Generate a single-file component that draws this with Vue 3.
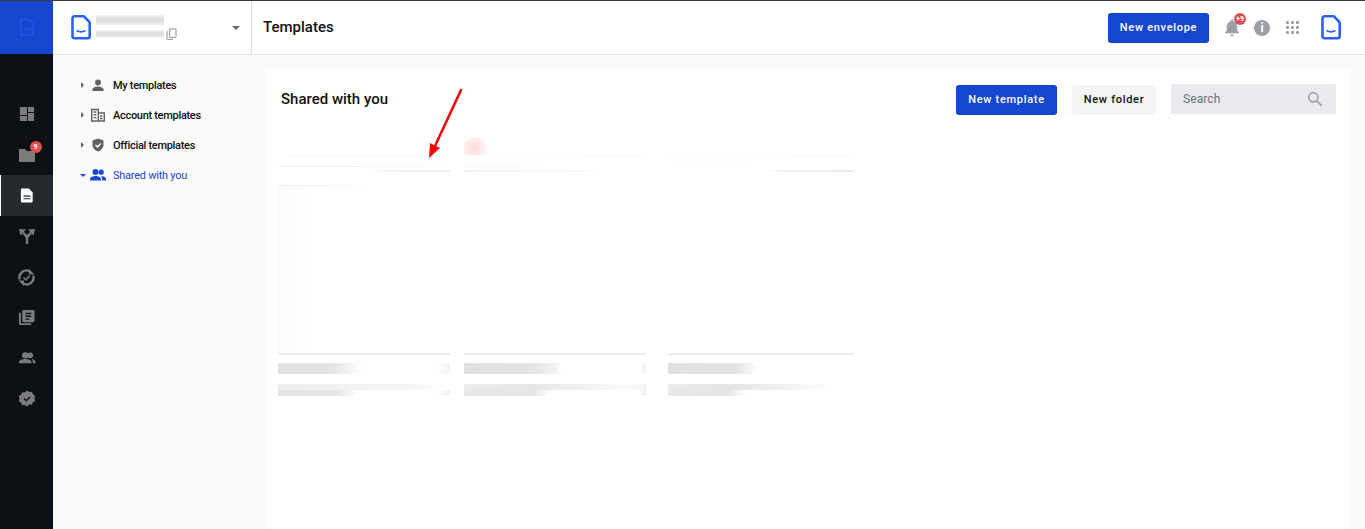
<script setup>
const cards = [
  {
    w: 172,
    a: 'linear-gradient(90deg,#fff 10px,#f6f6f6 10px,#f6f6f6 164px,#fff 164px)',
    b: 'linear-gradient(90deg,#f1f1f1,#f6f6f6 95px,#fbfbfb 172px)',
    c: 'linear-gradient(90deg,#fff 90px,#f3f3f3 110px,#efefef 172px)',
    d: 'linear-gradient(90deg,#eeeeee,#f8f8f8 70px,#fff 98px)',
    t: 'linear-gradient(90deg,#e2e2e2,#e4e4e4 55px,#fff 84px,#fff 160px,#f2f2f2 172px)',
    u: 'linear-gradient(90deg,#eeeeee,#f2f2f2 70px,#f5f5f5 130px,#fff 165px)',
    v: 'linear-gradient(90deg,#e4e4e4,#e6e6e6 60px,#fff 80px,#fff 160px,#f0f0f0 172px)',
  },
  {
    w: 182,
    a: 'linear-gradient(90deg,#fafafa,#f8f8f8)',
    b: 'linear-gradient(90deg,#f6f6f6,#fafafa 70px,#fff 85px)',
    c: 'linear-gradient(90deg,#f0f0f0,#f5f5f5 20px,#f6f6f6 80px,#fbfbfb 125px,#fff 140px)',
    d: 'linear-gradient(90deg,#fff,#fff)',
    t: 'linear-gradient(90deg,#e0e0e0,#e4e4e4 70px,#f3f3f3 92px,#fff 97px,#fff 175px,#f2f2f2 182px)',
    u: 'linear-gradient(90deg,#ececec,#e6e6e6 70px,#f0f0f0 110px,#fbfbfb 165px,#f4f4f4 182px)',
    v: 'linear-gradient(90deg,#e8e8e8,#e4e4e4 70px,#fff 85px,#fff 175px,#f0f0f0 182px)',
  },
  {
    w: 186,
    a: 'linear-gradient(90deg,#fafafa,#f8f8f8)',
    b: 'linear-gradient(90deg,#fff 0,#fafafa 10px,#fcfcfc 70px,#fff 90px)',
    c: 'linear-gradient(90deg,#fff 100px,#f0f0f0 115px,#ebebeb 186px)',
    d: 'linear-gradient(90deg,#fff,#fff)',
    t: 'linear-gradient(90deg,#e0e0e0,#e4e4e4 68px,#fff 90px)',
    u: 'linear-gradient(90deg,#ececec,#e4e4e4 65px,#f0f0f0 110px,#fff 165px)',
    v: 'linear-gradient(90deg,#e8e8e8,#e4e4e4 60px,#fff 78px)',
  },
]
const tree = [
  { label: 'My templates', icon: 'person' },
  { label: 'Account templates', icon: 'building' },
  { label: 'Official templates', icon: 'shield' },
  { label: 'Shared with you', icon: 'people', active: true },
]
</script>

<template>
  <div class="app">
    <aside class="rail">
      <div class="rail-head">
        <svg width="14" height="17" viewBox="0 0 20 25"><path d="M3 1h10l6 6v15a2 2 0 0 1-2 2H3a2 2 0 0 1-2-2V3a2 2 0 0 1 2-2z" fill="none" stroke="#1f55ea" stroke-width="2.200"/><path d="M1 15h18" stroke="#1f55ea" stroke-width="1.800"/></svg>
      </div>
      <nav class="rail-nav">
        <a class="rail-item">
          <svg width="16" height="16" viewBox="0 0 18 18" fill="#7b7b7b"><path d="M1 1h8v9H1zM10 1h7v6h-7zM10 8h7v9h-7zM1 11h8v6H1z"/><path d="M9 1h1v16H9zM1 10h9v1H1zM10 7h7v1h-7z" fill="#0d1116"/></svg>
        </a>
        <a class="rail-item">
          <span class="folder-wrap">
            <svg width="18" height="18" viewBox="0 0 18 18" fill="#7b7b7b"><path d="M1 3h6l2 2h7.500a.5.500 0 0 1 .5.500V16H1z"/></svg>
            <span class="dot">9</span>
          </span>
        </a>
        <a class="rail-item active">
          <svg width="14" height="17" viewBox="0 0 16 18"><path d="M2.500 1H10l4.500 4.500V15.500A1.500 1.500 0 0 1 13 17H2.500A1.500 1.500 0 0 1 1 15.500v-13A1.500 1.500 0 0 1 2.500 1z" fill="#fff"/><path d="M4 9h8v1.300H4zM4 12h8v1.300H4z" fill="#26292e"/></svg>
        </a>
        <a class="rail-item">
          <svg width="16" height="16" viewBox="0 0 16 16" fill="#7b7b7b"><path d="M6.800 16h2.400V9.800l3.800-4.200-1.700-1.600L8 7 5 4 3.300 5.600 6.800 9.800z"/><path d="M0 1l7 .5L1.500 7.500zM16 1l-7 .5 5.500 6z"/></svg>
        </a>
        <a class="rail-item">
          <svg width="17" height="17" viewBox="0 0 17 17" fill="none" stroke="#7b7b7b" stroke-width="2.300"><path d="M1.800 10.500A6.800 6.800 0 0 1 12 2.700"/><path d="M15.200 6.500A6.800 6.800 0 0 1 5 14.300"/><path d="M11 0v5.500h5.500z" fill="#7b7b7b" stroke="none"/><path d="M6 17v-5.500H.5z" fill="#7b7b7b" stroke="none"/><path d="M5.500 8.500l2.300 2.300L11.700 6.500" stroke-width="1.600"/></svg>
        </a>
        <a class="rail-item">
          <svg width="17" height="17" viewBox="0 0 18 18" fill="#7b7b7b"><path d="M1 4h2v11h11v2H2.500A1.500 1.500 0 0 1 1 15.500z"/><path fill-rule="evenodd" d="M6 1h10a1.500 1.500 0 0 1 1.500 1.500v10A1.500 1.500 0 0 1 16 14H6a1.500 1.500 0 0 1-1.500-1.500v-10A1.500 1.500 0 0 1 6 1zm2 3v1.500h6V4zm0 3v1.500h6V7zm0 3v1.500h4V10z"/></svg>
        </a>
        <a class="rail-item">
          <svg width="18" height="16" viewBox="0 0 20 18" fill="#7b7b7b"><circle cx="8" cy="6" r="3.600"/><circle cx="13.500" cy="6" r="3.300"/><path d="M1 15v-1.500C1 11 5 10 8 10s7 1 7 3.500V15zM15.500 10.200c2 .4 4 1.300 4 3.300V15h-3v-1.500c0-1.300-.400-2.400-1-3.300z"/></svg>
        </a>
        <a class="rail-item">
          <svg width="18" height="18" viewBox="0 0 18 18"><path d="M9 .5l2.200 1.500 2.700-.2 1 2.500 2.300 1.400-.7 2.600.7 2.600-2.300 1.400-1 2.500-2.700-.2L9 16.500l-2.200-1.500-2.700.2-1-2.500-2.300-1.400.7-2.600-.7-2.600 2.300-1.400 1-2.500 2.700.2z" fill="#7b7b7b"/><path d="M6 8.500l2.200 2.200L12 7" fill="none" stroke="#0d1116" stroke-width="1.500"/></svg>
        </a>
      </nav>
    </aside>

    <div class="body">
      <header class="topbar">
        <div class="account">
          <svg width="20" height="25" viewBox="0 0 20 25"><path d="M3.500 1.300h9.500l5.700 6v14a2 2 0 0 1-2 2H3.500a2 2 0 0 1-2-2v-18a2 2 0 0 1 2-2z" fill="#fff" stroke="#2b62f2" stroke-width="2.600" stroke-linejoin="round"/><path d="M5.500 15.500c3 1.800 6 1.800 9 0" fill="none" stroke="#2b62f2" stroke-width="1.800"/></svg>
          <div class="acc-lines">
            <span class="acc-line l1"></span>
            <span class="acc-row">
              <span class="acc-line l2"></span>
              <svg width="11" height="12" viewBox="0 0 11 12" fill="none" stroke="#a8a5a2" stroke-width="1.200"><rect x="3.500" y=".8" width="6.500" height="8.500" rx=".8"/><path d="M1 3v7.500a.8.8 0 0 0 .8.8H7"/></svg>
            </span>
          </div>
          <span class="caret-down"></span>
        </div>
        <h1 class="page-title">Templates</h1>
        <div class="top-actions">
          <button class="btn primary env">New envelope</button>
          <span class="bell">
            <svg width="16" height="18" viewBox="0 0 16 18" fill="#9aa0a6"><path d="M8 0.500a1.200 1.200 0 0 1 1.200 1.200v.6c2.500.6 4 2.800 4 5.200v4l1.800 2v.8H1v-.8l1.800-2v-4c0-2.400 1.500-4.600 4-5.200v-.6A1.200 1.200 0 0 1 8 .5zM6.300 15.500h3.400a1.700 1.700 0 0 1-3.400 0z"/></svg>
            <span class="bell-badge">+9</span>
          </span>
          <span class="info">i</span>
          <span class="grid-dots"><i v-for="n in 9" :key="n"></i></span>
          <svg class="logo-right" width="20" height="25" viewBox="0 0 20 25"><path d="M3.500 1.300h9.500l5.700 6v14a2 2 0 0 1-2 2H3.500a2 2 0 0 1-2-2v-18a2 2 0 0 1 2-2z" fill="#fff" stroke="#2b62f2" stroke-width="2.600" stroke-linejoin="round"/><path d="M5.500 15.500c3 1.800 6 1.800 9 0" fill="none" stroke="#2b62f2" stroke-width="1.800"/></svg>
        </div>
      </header>

      <div class="content">
        <ul class="tree">
          <li v-for="t in tree" :key="t.label" class="tree-item" :class="{ on: t.active }">
            <span :class="t.active ? 'tri-down' : 'tri-right'"></span>
            <svg v-if="t.icon === 'person'" class="t-ico" width="14" height="13" viewBox="0 0 14 14" fill="#5f6368"><circle cx="7" cy="3.800" r="3.200"/><path d="M1 13v-1.800C1 9.200 4.500 8 7 8s6 1.200 6 3.200V13z"/></svg>
            <svg v-else-if="t.icon === 'building'" class="t-ico" width="14" height="14" viewBox="0 0 14 14" fill="none" stroke="#5f6368" stroke-width="1.400"><path d="M.7 13V1.500h6.600V13zM7.300 5H13.300v8H7.300z"/><path d="M2.500 4h2.800M2.500 6.800h2.800M2.500 9.600h2.800M9 8h2.500M9 10.500h2.500"/></svg>
            <svg v-else-if="t.icon === 'shield'" class="t-ico" width="14" height="14" viewBox="0 0 14 14"><path d="M7 .5l5.500 2v4.300c0 3.300-2.300 5.800-5.500 6.700C3.800 12.600 1.500 10.100 1.500 6.800V2.500z" fill="#5f6368"/><path d="M4.500 7l2 2 3.200-3.500" fill="none" stroke="#fff" stroke-width="1.300"/></svg>
            <svg v-else class="t-ico wide" width="16" height="14" viewBox="0 0 16 14" fill="#1a47d4"><circle cx="5.500" cy="4" r="3"/><circle cx="11.200" cy="4.200" r="2.600"/><path d="M0 12.500v-1.300C0 9 3.300 8 5.500 8s5.500 1 5.500 3.200v1.300zM12 8.200c2 .2 4 1 4 3v1.300h-3.800v-1.300c0-1.200-.4-2.200-1.200-2.800z"/></svg>
            <span class="t-label">{{ t.label }}</span>
          </li>
        </ul>

        <main class="panel">
          <div class="panel-head">
            <h2 class="panel-title">Shared with you</h2>
            <div class="panel-actions">
              <button class="btn primary tpl">New template</button>
              <button class="btn ghost">New folder</button>
              <div class="search">
                <span class="search-ph">Search</span>
                <svg width="16" height="16" viewBox="0 0 16 16" fill="none" stroke="#a0a4a8" stroke-width="1.700"><circle cx="6.300" cy="6.300" r="4.600"/><path d="M9.800 9.800l5 5"/></svg>
              </div>
            </div>
          </div>

          <div class="cards">
            <div v-for="(c, i) in cards" :key="i" class="card" :style="{ width: c.w + 'px' }">
              <div class="card-top">
                <span class="line-a" :style="{ background: c.a }"></span>
                <span class="line-b" :style="{ background: c.b }"></span>
                <span class="line-c" :style="{ background: c.c }"></span>
                <span class="line-d" :style="{ background: c.d }"></span>
              </div>
              <div class="card-thumb"></div>
              <div class="card-foot">
                <span class="foot-t" :style="{ background: c.t }"></span>
                <span class="foot-u" :style="{ background: c.u }"></span>
                <span class="foot-v" :style="{ background: c.v }"></span>
              </div>
            </div>
          </div>

          <svg class="arrow" width="40" height="72" viewBox="0 0 40 72">
            <path d="M35 2L9 58" stroke="#f00a0a" stroke-width="2.600" fill="none" stroke-linecap="round"/>
            <path d="M3 70L4 55 14 60z" fill="#f00a0a"/>
          </svg>
          <span class="red-smudge"></span>
        </main>
      </div>
    </div>
  </div>
</template>

<style>
html, body { margin: 0; padding: 0; background: #fff; }
</style>

<style scoped>
.app {
  display: flex;
  height: 529px;
  width: 1365px;
  overflow: hidden;
  border-top: 1px solid #3a3a3a;
  box-sizing: border-box;
  font-family: Roboto, "Liberation Sans", sans-serif;
  background: #fafafa;
}
.rail { width: 53px; flex: none; background: #0d1116; display: flex; flex-direction: column; }
.rail-head { height: 53px; background: #1546cf; display: flex; align-items: center; justify-content: center; }
.rail-nav { padding-top: 40px; display: flex; flex-direction: column; }
.rail-item { height: 40.700px; display: flex; align-items: center; justify-content: center; box-sizing: border-box; }
.rail-item.active { background: #26292e; border-left: 1px solid #fff; }
.folder-wrap { position: relative; display: flex; }
.dot {
  position: absolute; top: -5px; right: -6px; width: 12px; height: 12px; border-radius: 50%;
  background: #e04f4f; color: #fff; font-size: 7px; line-height: 12px; text-align: center; font-weight: 700;
}
.body { flex: 1; display: flex; flex-direction: column; min-width: 0; }
.topbar {
  height: 54px; flex: none; box-sizing: border-box; background: #fff; border-bottom: 1px solid #e0e0e0;
  display: flex; align-items: center;
}
.account {
  width: 199px; height: 53px; flex: none; box-sizing: border-box; border-right: 1px solid #e0e0e0;
  display: flex; align-items: center; padding-left: 18px; position: relative;
}
.acc-lines { margin-left: 5px; display: flex; flex-direction: column; gap: 5px; margin-top: -2px; }
.acc-line { display: block; background: linear-gradient(180deg,#f4f4f4 0,#dedede 35%,#e0e0e0 65%,#f4f4f4 100%); }
.l1 { width: 68px; height: 10px; }
.l2 { width: 68px; height: 8px; }
.acc-row { display: flex; align-items: center; gap: 2px; height: 8px; }
.caret-down {
  position: absolute; right: 11px; top: 25px; width: 0; height: 0;
  border-left: 4px solid transparent; border-right: 4px solid transparent; border-top: 4px solid #6f6f6f;
}
.page-title { margin: -2px 0 0 11px; font-size: 15px; font-weight: 500; color: #111; }
.top-actions { margin-left: auto; display: flex; align-items: center; }
.btn {
  border: none; border-radius: 3px; font-family: inherit; font-size: 11px; font-weight: 500; letter-spacing: .7px;
  height: 30px; padding: 0; cursor: pointer;
}
.primary { background: #1546cf; color: #fff; }
.env { width: 101px; }
.tpl { width: 101px; }
.ghost { width: 84px; background: #f3f4f6; color: #111; margin-left: 15px; }
.bell { position: relative; display: flex; margin-left: 15px; }
.bell-badge {
  position: absolute; top: -6px; left: 10px; width: 12px; height: 12px; border-radius: 50%;
  background: #e04f4f; color: #fff; font-size: 7px; line-height: 12px; text-align: center; font-weight: 700;
}
.info {
  margin-left: 14px; width: 16px; height: 16px; border-radius: 50%; background: #9aa0a6; color: #fff;
  font-size: 12px; line-height: 16px; text-align: center; font-weight: 700;
}
.grid-dots { margin-left: 16px; display: grid; grid-template-columns: repeat(3, 3px); gap: 2px; }
.grid-dots i { width: 3px; height: 3px; background: #9aa0a6; border-radius: 1px; display: block; }
.logo-right { margin-left: 22px; margin-right: 24px; }

.content { flex: 1; display: flex; min-height: 0; }
.tree { width: 213px; flex: none; margin: 0; padding: 15px 0 0 27px; box-sizing: border-box; list-style: none; }
.tree-item { height: 30px; display: flex; align-items: center; font-size: 11px; font-weight: 500; color: #111; }
.tree-item.on { color: #1a47d4; font-weight: 400; }
.tri-right { width: 0; height: 0; border-top: 3px solid transparent; border-bottom: 3px solid transparent; border-left: 3px solid #5f6368; margin-left: 1px; margin-right: 7px; }
.tri-down { width: 0; height: 0; border-left: 3.500px solid transparent; border-right: 3.500px solid transparent; border-top: 3.500px solid #1a47d4; margin-right: 4px; }
.t-ico { flex: none; }
.t-label { margin-left: 8px; white-space: nowrap; letter-spacing: -.3px; }
.on .t-label { margin-left: 7px; letter-spacing: -.25px; }

.panel {
  position: relative; flex: none; width: 1085px; margin-top: 14px; background: #fff; border-radius: 4px;
  box-sizing: border-box; padding: 0 15px 0 12px;
}
.panel-head { height: 60px; display: flex; align-items: center; justify-content: space-between; padding-top: 1px; box-sizing: border-box; }
.panel-title { margin: -2px 0 0 3px; font-size: 15px; font-weight: 500; color: #111; }
.panel-actions { display: flex; align-items: center; }
.search {
  margin-left: 15px; margin-top: -2px; width: 165px; height: 30px; background: #e9eaed; border-radius: 3px 3px 0 0; box-sizing: border-box;
  display: flex; align-items: center; justify-content: space-between; padding: 0 13px 0 12px;
}
.search-ph { font-size: 12px; color: #6f7377; letter-spacing: .1px; }

.cards { display: flex; gap: 14px; margin-top: 26px; }
.card:nth-child(3) { margin-left: 8px; }
.card { flex: none; }
.card-top { height: 31px; position: relative; }
.line-a { position: absolute; left: 0; right: 0; top: 0; height: 1px; }
.line-b { position: absolute; left: 0; right: 0; top: 11px; height: 1px; }
.line-c { position: absolute; left: 0; right: 0; top: 15px; height: 2px; }
.line-d { position: absolute; left: 0; right: 0; top: 30px; height: 1px; }
.card-thumb { height: 169px; box-sizing: border-box; border-bottom: 2px solid #ececec; }
.card:first-child .card-thumb { background: linear-gradient(90deg,#fbfbfb 0,#fdfdfd 26px,#fff 29px); }
.card-foot { padding-top: 8px; }
.foot-t { display: block; height: 11px; }
.foot-u { display: block; height: 6px; margin-top: 10px; }
.foot-v { display: block; height: 6px; }

.arrow { position: absolute; left: 160px; top: 19px; }
.red-smudge {
  position: absolute; left: 198px; top: 68px; width: 23px; height: 18px;
  background: radial-gradient(ellipse at 45% 62%, #ffd8d8 0, #ffeaea 50%, #fff 85%);
}
</style>
